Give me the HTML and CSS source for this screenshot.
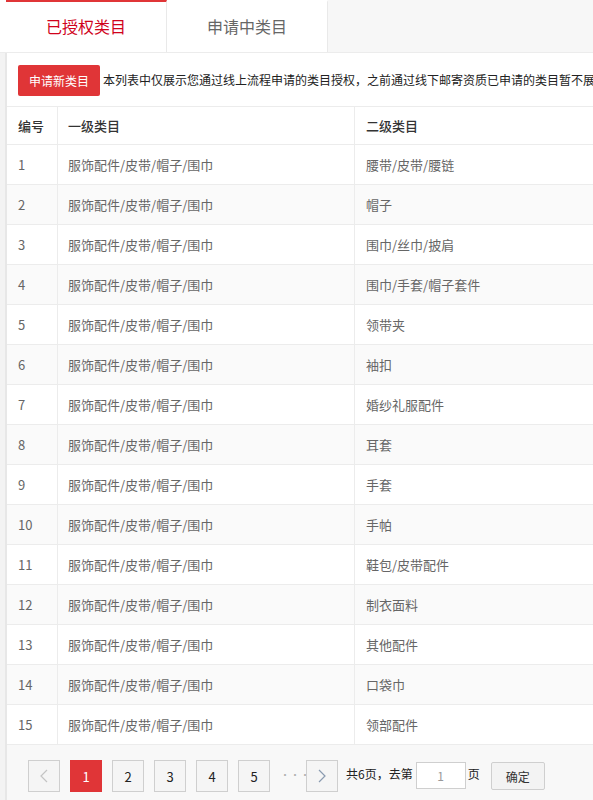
FILE: index.html
```html
<!DOCTYPE html>
<html lang="zh-CN">
<head>
<meta charset="utf-8">
<title>已授权类目</title>
<link rel="stylesheet" href="styles.css">
</head>
<body>
<div class="tabs">
  <div class="tab active">已授权类目</div>
  <div class="tab">申请中类目</div>
  <div class="tab-rest"></div>
</div>
<div class="body">
  <div class="strip"></div>
  <div class="panel">
    <div class="toolbar">
      <button class="btn-apply">申请新类目</button>
      <span class="notice">本列表中仅展示您通过线上流程申请的类目授权，之前通过线下邮寄资质已申请的类目暂不展示</span>
    </div>
    <div class="grid">
      <div class="row head"><div class="c c1">编号</div><div class="c c2">一级类目</div><div class="c c3">二级类目</div></div>
      <div class="row"><div class="c c1">1</div><div class="c c2">服饰配件/皮带/帽子/围巾</div><div class="c c3">腰带/皮带/腰链</div></div>
      <div class="row alt"><div class="c c1">2</div><div class="c c2">服饰配件/皮带/帽子/围巾</div><div class="c c3">帽子</div></div>
      <div class="row"><div class="c c1">3</div><div class="c c2">服饰配件/皮带/帽子/围巾</div><div class="c c3">围巾/丝巾/披肩</div></div>
      <div class="row alt"><div class="c c1">4</div><div class="c c2">服饰配件/皮带/帽子/围巾</div><div class="c c3">围巾/手套/帽子套件</div></div>
      <div class="row"><div class="c c1">5</div><div class="c c2">服饰配件/皮带/帽子/围巾</div><div class="c c3">领带夹</div></div>
      <div class="row alt"><div class="c c1">6</div><div class="c c2">服饰配件/皮带/帽子/围巾</div><div class="c c3">袖扣</div></div>
      <div class="row"><div class="c c1">7</div><div class="c c2">服饰配件/皮带/帽子/围巾</div><div class="c c3">婚纱礼服配件</div></div>
      <div class="row alt"><div class="c c1">8</div><div class="c c2">服饰配件/皮带/帽子/围巾</div><div class="c c3">耳套</div></div>
      <div class="row"><div class="c c1">9</div><div class="c c2">服饰配件/皮带/帽子/围巾</div><div class="c c3">手套</div></div>
      <div class="row alt"><div class="c c1">10</div><div class="c c2">服饰配件/皮带/帽子/围巾</div><div class="c c3">手帕</div></div>
      <div class="row"><div class="c c1">11</div><div class="c c2">服饰配件/皮带/帽子/围巾</div><div class="c c3">鞋包/皮带配件</div></div>
      <div class="row alt"><div class="c c1">12</div><div class="c c2">服饰配件/皮带/帽子/围巾</div><div class="c c3">制衣面料</div></div>
      <div class="row"><div class="c c1">13</div><div class="c c2">服饰配件/皮带/帽子/围巾</div><div class="c c3">其他配件</div></div>
      <div class="row alt"><div class="c c1">14</div><div class="c c2">服饰配件/皮带/帽子/围巾</div><div class="c c3">口袋巾</div></div>
      <div class="row"><div class="c c1">15</div><div class="c c2">服饰配件/皮带/帽子/围巾</div><div class="c c3">领部配件</div></div>
    </div>
    <div class="pager">
      <span class="pg disabled"><svg width="8" height="14" viewBox="0 0 8 14"><polyline points="7,1 1,7 7,13" fill="none" stroke="#c4c4c4" stroke-width="1.2"/></svg></span>
      <span class="pg current">1</span>
      <span class="pg">2</span>
      <span class="pg">3</span>
      <span class="pg">4</span>
      <span class="pg">5</span>
      <span class="ellipsis">···</span>
      <span class="pg next"><svg width="8" height="14" viewBox="0 0 8 14"><polyline points="1,1 7,7 1,13" fill="none" stroke="#8a9bb0" stroke-width="1.2"/></svg></span>
      <span class="total">共6页，去第</span>
      <input class="goto" type="text" value="1">
      <span class="unit">页</span>
      <button class="btn-ok">确定</button>
    </div>
  </div>
</div>
</body>
</html>
```
FILE: styles.css
```css
html, body {
  margin: 0;
  padding: 0;
  background: #fff;
  overflow: hidden;
  font-family: "Microsoft YaHei", "Noto Sans CJK SC", "Noto Sans", sans-serif;
}
.tabs {
  display: flex;
  height: 53px;
  box-sizing: border-box;
  padding-left: 6px;
  border-bottom: 1px solid #ececec;
}
.tab {
  width: 161px;
  box-sizing: border-box;
  border-right: 1px solid #e9e9e9;
  border-top: 2px solid transparent;
  background: #fff;
  display: flex;
  align-items: center;
  justify-content: center;
  font-size: 16px;
  line-height: 20px;
  color: #666;
  padding-bottom: 2px;
}
.tab.active {
  border-top-color: #e03537;
  color: #d0021b;
}
.tab-rest {
  flex: 1;
  background: #f7f7f7;
}
.body {
  display: flex;
}
.strip {
  width: 7px;
  flex: none;
  background: linear-gradient(to right, #f3f3f3 0, #f3f3f3 5px, #e7e7e7 5px, #e7e7e7 7px);
}
.panel {
  flex: 1;
  min-width: 0;
  overflow: hidden;
}
.toolbar {
  height: 53px;
  box-sizing: border-box;
  display: flex;
  align-items: center;
  padding: 0 0 0 11px;
  white-space: nowrap;
}
.btn-apply {
  flex: none;
  width: 82px;
  height: 31px;
  margin: 1px 3px 0 0;
  padding: 0;
  border: none;
  border-radius: 2px;
  background: #e03537;
  color: #fff;
  font-family: inherit;
  font-size: 12px;
  line-height: 31px;
}
.notice {
  font-size: 12px;
  line-height: 16px;
  color: #222;
}
.grid {
  width: 800px;
  border-top: 1px solid #ececec;
}
.row {
  display: grid;
  grid-template-columns: 51px 297px 1fr;
  height: 40px;
  box-sizing: border-box;
  border-bottom: 1px solid #ececec;
  font-size: 13px;
  color: #666;
}
.row.head {
  height: 38px;
  color: #333;
  font-weight: 500;
}
.row.alt {
  background: #fafafa;
}
.c {
  display: flex;
  align-items: center;
  box-sizing: border-box;
  line-height: 18px;
  white-space: nowrap;
}
.c1 {
  padding-left: 11px;
  border-right: 1px solid #ececec;
}
.c2 {
  padding-left: 10px;
  border-right: 1px solid #ececec;
}
.c3 {
  padding-left: 11px;
}
.pager {
  height: 56px;
  box-sizing: border-box;
  background: #f8f8f8;
  display: flex;
  align-items: flex-start;
  padding: 15px 0 0 21px;
  font-size: 12px;
  color: #222;
  white-space: nowrap;
}
.pg {
  flex: none;
  width: 32px;
  height: 32px;
  box-sizing: border-box;
  border: 1px solid #cfcfcf;
  background: #f5f5f5;
  display: flex;
  align-items: center;
  justify-content: center;
  margin-right: 10px;
  font-size: 13px;
  color: #222;
}
.pg.current {
  background: #e03537;
  border-color: #e03537;
  color: #fff;
}
.ellipsis {
  width: 22px;
  height: 32px;
  line-height: 30px;
  margin-right: 4px;
  color: #b0b0b0;
  font-size: 10px;
  text-align: center;
  letter-spacing: 0;
}
.pg.next {
  margin-right: 8px;
}
.total, .unit {
  height: 28px;
  line-height: 26px;
  margin-top: 1px;
}
.goto {
  width: 50px;
  height: 27px;
  box-sizing: border-box;
  margin: 2px 2px 0 3px;
  border: 1px solid #cfcfcf;
  background: #fff;
  text-align: center;
  font-family: inherit;
  font-size: 12px;
  color: #999;
  padding: 0;
  outline: none;
}
.btn-ok {
  width: 54px;
  height: 28px;
  margin: 2px 0 0 11px;
  padding: 0;
  border: 1px solid #cfcfcf;
  border-radius: 2px;
  background: #f3f3f3;
  font-family: inherit;
  font-size: 12px;
  color: #333;
}
```
